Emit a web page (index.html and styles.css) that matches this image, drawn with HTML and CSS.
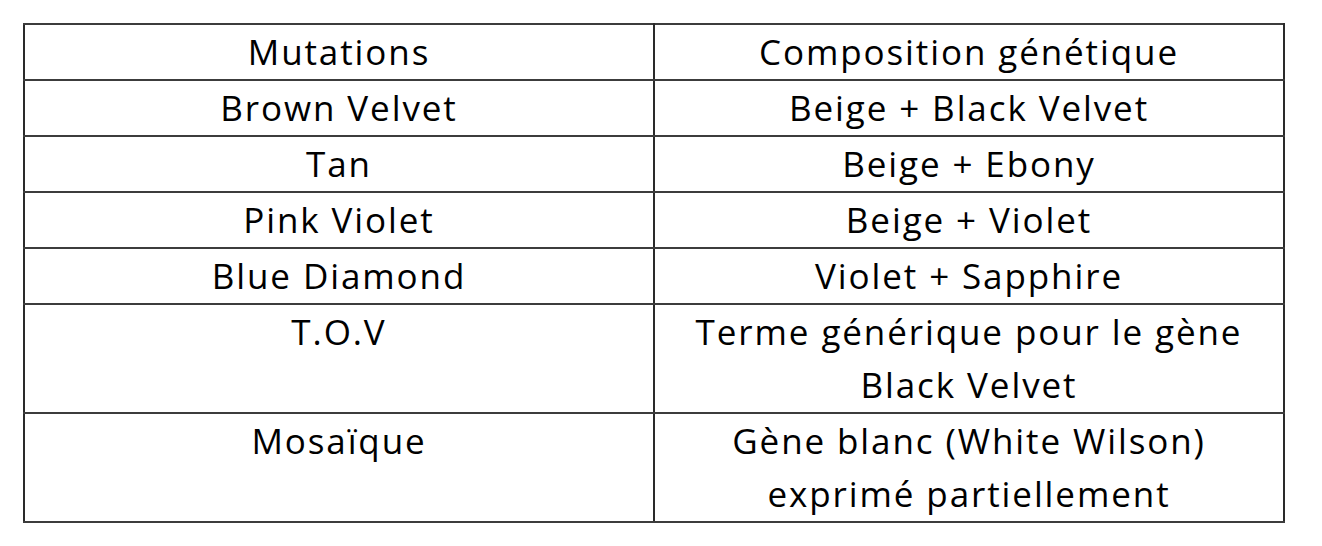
FILE: index.html
```html
<!DOCTYPE html>
<html lang="fr">
<head>
<meta charset="utf-8">
<title>Mutations</title>
<link rel="stylesheet" href="styles.css">
</head>
<body>
<div class="page">
<table class="mut-table">
  <colgroup><col class="c1"><col class="c2"></colgroup>
  <tr><td>Mutations</td><td>Composition génétique</td></tr>
  <tr><td>Brown Velvet</td><td>Beige + Black Velvet</td></tr>
  <tr><td>Tan</td><td>Beige + Ebony</td></tr>
  <tr><td>Pink Violet</td><td>Beige + Violet</td></tr>
  <tr><td>Blue Diamond</td><td>Violet + Sapphire</td></tr>
  <tr><td>T.O.V</td><td>Terme générique pour le gène<br>Black Velvet</td></tr>
  <tr><td>Mosaïque</td><td>Gène blanc (White Wilson)<br>exprimé partiellement</td></tr>
</table>
</div>
</body>
</html>
```

FILE: styles.css
```css
html, body {
  margin: 0;
  padding: 0;
  background: #ffffff;
}
.page {
  padding: 23px 0 0 23px;
}
.mut-table {
  border-collapse: collapse;
  table-layout: fixed;
  width: 1260px;
  border: 2px solid #3c3c3c;
  font-family: "Open Sans", "Noto Sans", sans-serif;
  font-size: 35px;
  letter-spacing: 1.9px;
  color: #000000;
}
.mut-table col.c1 { width: 630px; }
.mut-table col.c2 { width: 630px; }
.mut-table td {
  border-top: 2px solid #3c3c3c;
  border-bottom: 2px solid #3c3c3c;
  border-left: 2px solid #2a2a2a;
  border-right: 2px solid #2a2a2a;
  padding: 0 0 1px 0;
  line-height: 53px;
  text-align: center;
  vertical-align: top;
}
```
